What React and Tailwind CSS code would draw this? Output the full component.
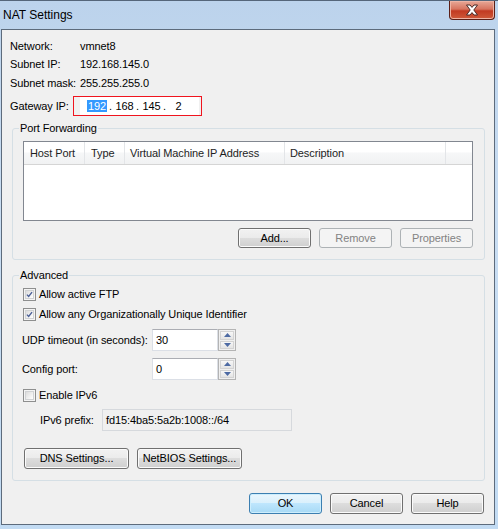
import React from 'react'

const BTN = "h-full w-[73px] rounded-[3px] border border-[#707070] bg-[linear-gradient(#f2f2f2_0%,#ebebeb_49%,#dddddd_50%,#cfcfcf_100%)] shadow-[inset_0_0_0_1px_#fbfbfb] flex items-center justify-center text-black"
const BTN_OFF = "h-full w-[73px] rounded-[3px] border border-[#adb2b5] bg-[#f4f4f4] flex items-center justify-center text-[#838383]"
const BTN_DEF = "h-full w-[73px] rounded-[3px] border border-[#3c7fb1] bg-[linear-gradient(#eaf6fd_0%,#d9f0fc_49%,#bee6fd_50%,#a7d9f5_100%)] shadow-[inset_0_0_0_1px_#cdeefd] flex items-center justify-center text-black"
const WIDE = "h-full w-[105px] rounded-[3px] border border-[#707070] bg-[linear-gradient(#f2f2f2_0%,#ebebeb_49%,#dddddd_50%,#cfcfcf_100%)] shadow-[inset_0_0_0_1px_#fbfbfb] flex items-center justify-center text-black"

function Check({ checked, label }) {
  return (
    <div className="h-[20px] flex items-center ml-[10px]">
      <div className="w-[13px] h-[13px] border border-[#8e8f8f] bg-[#f4f4f4] p-[1px]">
        <div className="w-full h-full border border-[#d0d2d4] bg-[linear-gradient(135deg,#dcdcdc,#ffffff)] flex items-center justify-center">
          {checked && (
            <svg width="9" height="9" viewBox="0 0 9 9">
              <path d="M1.2 4.6 L3.4 7 L7.8 1.4" fill="none" stroke="#4a5f97" strokeWidth="1.7" />
            </svg>
          )}
        </div>
      </div>
      <span className="ml-[3px]">{label}</span>
    </div>
  )
}

function Arrow({ up }) {
  return (
    <div className="flex-1 border border-[#d3d3d3] bg-[linear-gradient(#f7f7f7,#e4e4e4)] flex items-center justify-center">
      <svg width="7" height="4" viewBox="0 0 7 4">
        <path d={up ? 'M0 4 L3.5 0 L7 4 Z' : 'M0 0 L7 0 L3.5 4 Z'} fill="#4d6aa3" />
      </svg>
    </div>
  )
}

function Spin({ label, value }) {
  return (
    <div className="h-[22px] flex items-center ml-[9px]">
      <span className="w-[130px]">{label}</span>
      <div className="w-[66px] h-full bg-white border border-[#dbdfe6] border-t-[#abadb3] flex items-center pl-[3px]">{value}</div>
      <div className="w-[18px] h-full border border-[#b4b4b4] bg-[#f0f0f0] p-[1px] flex flex-col gap-[1px]">
        <Arrow up />
        <Arrow />
      </div>
    </div>
  )
}

export default function App() {
  return (
    <div className="w-[498px] h-[529px] flex flex-col border-t border-[#55667a] bg-[linear-gradient(#bcd3ec,#c9ddf2_40%,#c2dbf3)] font-['Liberation_Sans',Arial,sans-serif] text-[11px] tracking-[-0.1px] text-black">
      {/* title bar */}
      <div className="h-[28px] flex items-start justify-between">
        <div className="h-full flex items-center pl-[3px] text-[12px] tracking-normal">NAT Settings</div>
        <div className="w-[46px] h-[19px] mr-[3px] rounded-b-[4px] border border-t-0 border-[#5b1f17] bg-[linear-gradient(#e8a897_0%,#d7745f_45%,#c23a22_55%,#cf5a3a_100%)] shadow-[inset_0_0_0_1px_#eeb3a4] flex items-center justify-center">
          <svg width="14" height="12" viewBox="0 0 14 12">
            <path d="M1.5 1 L5 1 L7 3.4 L9 1 L12.5 1 L8.8 6 L12.5 11 L9 11 L7 8.6 L5 11 L1.5 11 L5.2 6 Z" fill="#ffffff" stroke="#4a2a26" strokeWidth="1" strokeLinejoin="round" />
          </svg>
        </div>
      </div>

      {/* client area */}
      <div className="ml-[1px] w-[494px] h-[496px] border border-[#5d6b7c] bg-[#f0f0f0] flex flex-col">
        <div className="pl-[8px] pt-[7px] flex flex-col">
          <div className="h-[18px] flex items-center"><span className="w-[70px]">Network:</span><span>vmnet8</span></div>
          <div className="h-[18px] flex items-center"><span className="w-[70px]">Subnet IP:</span><span>192.168.145.0</span></div>
          <div className="h-[18px] mt-[1px] flex items-center"><span className="w-[70px]">Subnet mask:</span><span>255.255.255.0</span></div>
          <div className="h-[20px] mt-[4px] flex items-center">
            <span className="w-[63px]">Gateway IP:</span>
            <div className="w-[129px] h-full border border-[#f0141e] pl-[6px] pr-[2px]">
              <div className="h-full bg-white flex items-center pl-[7px]">
                <span className="w-[20px] h-[12px] bg-[#3399ff] text-white flex items-center justify-center">192</span>
                <span className="w-[8px] pl-[2px]">.</span>
                <span className="w-[19px] text-center">168</span>
                <span className="w-[8px] pl-[2px]">.</span>
                <span className="w-[19px] text-center">145</span>
                <span className="w-[8px] pl-[2px]">.</span>
                <span className="w-[19px] text-center">2</span>
              </div>
            </div>
          </div>
        </div>

        {/* Port Forwarding */}
        <div className="relative mt-[12px] ml-[10px] mr-[9px] border border-[#d5dfe5] rounded-[3px] flex flex-col pb-[11px]">
          <span className="absolute left-[6px] top-[-8px] px-[1px] bg-[#f0f0f0] leading-[14px]">Port Forwarding</span>
          <div className="mt-[12px] ml-[10px] mr-[11px] h-[80px] border border-[#828790] bg-white">
            <div className="h-[23px] flex border-b border-[#d5d5d5] bg-[linear-gradient(#ffffff_0%,#ffffff_45%,#f6f7f8_50%,#f1f2f3_100%)] text-[#1e1e1e]">
              <div className="w-[61px] pl-[6px] flex items-center border-r border-[#e3e5e8]">Host Port</div>
              <div className="w-[40px] pl-[6px] flex items-center border-r border-[#e3e5e8]">Type</div>
              <div className="w-[160px] pl-[5px] flex items-center border-r border-[#e3e5e8]">Virtual Machine IP Address</div>
              <div className="w-[161px] pl-[5px] flex items-center border-r border-[#e3e5e8]">Description</div>
              <div className="flex-1" />
            </div>
          </div>
          <div className="mt-[7px] h-[20px] flex justify-end gap-[8px] pr-[11px]">
            <div className={BTN}>Add...</div>
            <div className={BTN_OFF}>Remove</div>
            <div className={BTN_OFF}>Properties</div>
          </div>
        </div>

        {/* Advanced */}
        <div className="relative mt-[15px] ml-[10px] mr-[9px] border border-[#d5dfe5] rounded-[3px] flex flex-col pb-[11px]">
          <span className="absolute left-[6px] top-[-8px] px-[1px] bg-[#f0f0f0] leading-[14px]">Advanced</span>
          <div className="mt-[8px]"><Check checked label="Allow active FTP" /></div>
          <Check checked label="Allow any Organizationally Unique Identifier" />
          <div className="mt-[5px]"><Spin label="UDP timeout (in seconds):" value="30" /></div>
          <div className="mt-[7px]"><Spin label="Config port:" value="0" /></div>
          <div className="mt-[5px]"><Check label="Enable IPv6" /></div>
          <div className="mt-[4px] h-[22px] flex items-center ml-[27px]">
            <span className="w-[62px]">IPv6 prefix:</span>
            <div className="w-[190px] h-full border border-[#d6d9dd] bg-[#f0f0f0] flex items-center pl-[3px]">fd15:4ba5:5a2b:1008::/64</div>
          </div>
          <div className="mt-[17px] h-[21px] ml-[11px] flex gap-[8px]">
            <div className={WIDE}>DNS Settings...</div>
            <div className={WIDE}>NetBIOS Settings...</div>
          </div>
        </div>

        <div className="mt-[12px] h-[21px] flex justify-end gap-[8px] pr-[10px]">
          <div className={BTN_DEF}>OK</div>
          <div className={BTN}>Cancel</div>
          <div className={BTN}>Help</div>
        </div>
      </div>
    </div>
  )
}
